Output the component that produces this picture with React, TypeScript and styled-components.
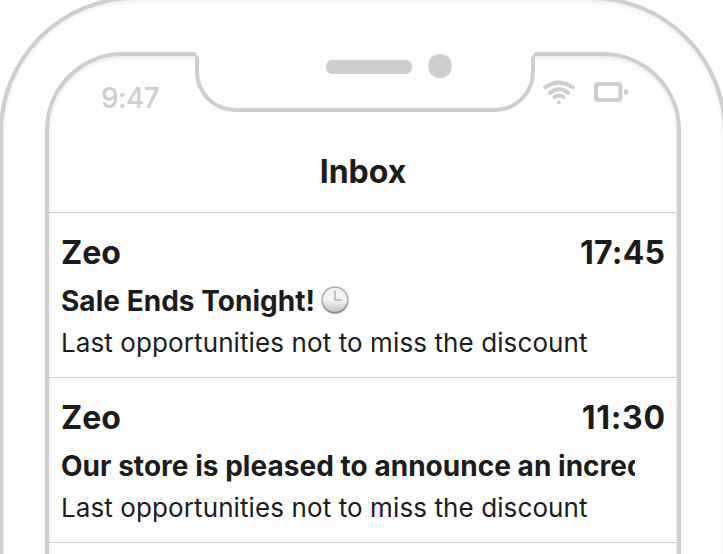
import React from "react";
import styled, { createGlobalStyle } from "styled-components";

const line = "#cecece";
const ink = "#1c1c1c";
const paper = "#fefefe";

const GlobalStyle = createGlobalStyle`
  * { box-sizing: border-box; }
  html, body { margin: 0; overflow: hidden; background: ${paper}; }
`;

const Stage = styled.main`
  width: 723px;
  height: 554px;
  overflow: hidden;
  display: flex;
  justify-content: center;
  align-items: flex-start;
  font-family: Inter, "Liberation Sans", sans-serif;
  color: ${ink};
`;

const Phone = styled.div`
  flex: none;
  width: 728px;
  height: 1400px;
  margin: -4px 0 0 3px;
  padding: 52px 42px;
  border: 4px solid ${line};
  border-radius: 136px;
  background: ${paper};
  box-shadow: inset 0 1px 4px rgba(0, 0, 0, 0.09);
`;

const Screen = styled.div`
  position: relative;
  height: 1200px;
  border: 4px solid ${line};
  border-radius: 78px;
  box-shadow: inset 0 1px 4px rgba(0, 0, 0, 0.11);
`;

const Notch = styled.div`
  position: absolute;
  top: -4px;
  left: 146px;
  width: 340px;
  height: 60px;
  display: flex;
  justify-content: flex-end;
  gap: 16px;
  padding: 0 79px 0 0;
  border: 4px solid ${line};
  border-top: 6px solid ${paper};
  border-radius: 0 0 40px 40px;
  background: ${paper};
`;

const Speaker = styled.span`
  width: 86px;
  height: 14px;
  margin-top: 2px;
  border-radius: 6px;
  background: ${line};
`;

const Camera = styled.span`
  width: 24px;
  height: 24px;
  margin-top: -4px;
  border-radius: 50%;
  background: ${line};
`;

const StatusBar = styled.header`
  height: 80px;
  display: flex;
  justify-content: space-between;
  align-items: flex-start;
  padding: 24px 49px 0 52px;
`;

const Clock = styled.span`
  padding-top: 1px;
  font-size: 28px;
  font-weight: 500;
  line-height: 34px;
  letter-spacing: -0.6px;
  color: ${line};
`;

const Indicators = styled.div`
  display: flex;
  align-items: flex-start;
  gap: 18px;
`;

const Heading = styled.h1`
  height: 77px;
  margin: 0;
  padding-top: 16px;
  border-bottom: 1px solid ${line};
  font-size: 32px;
  font-weight: 700;
  line-height: 40px;
  text-align: center;
`;

const Message = styled.article`
  height: 165px;
  padding: 20px 12px 0 12px;
  border-bottom: 1px solid ${line};
`;

const MessageTop = styled.div`
  display: flex;
  justify-content: space-between;
  font-size: 32px;
  font-weight: 700;
  line-height: 40px;
`;

const Time = styled.time<{ $tracking: number }>`
  letter-spacing: ${(p) => p.$tracking}px;
  margin-right: ${(p) => -p.$tracking}px;
`;

const Subject = styled.div`
  display: flex;
  align-items: center;
  gap: 6px;
  width: 574px;
  height: 36px;
  margin-top: 10px;
  overflow: hidden;
  white-space: nowrap;
  font-size: 28px;
  font-weight: 700;
  line-height: 36px;
  letter-spacing: 0.03px;
`;

const Preview = styled.p`
  margin: 6px 0 0;
  font-size: 26px;
  line-height: 36px;
  letter-spacing: 0.1px;
  white-space: nowrap;
`;

const WifiIcon = () => (
  <svg width="34" height="26" viewBox="0 0 34 26" fill="none" stroke={line} strokeWidth="4" strokeLinecap="round">
    <path d="M3 7.4 Q17 -2.2 31 7.4" />
    <path d="M8 12.9 Q17 5.6 26 12.9" />
    <path d="M12.6 17.1 Q17 14 21.4 17.1" />
    <circle cx="16.9" cy="22.5" r="1.9" fill={line} stroke="none" />
  </svg>
);

const BatteryIcon = () => (
  <svg width="34" height="24" viewBox="0 0 34 24" fill="none">
    <rect x="2" y="4" width="24.4" height="16" rx="2.5" stroke={line} strokeWidth="4" />
    <rect x="29.8" y="9" width="4.2" height="6" rx="2" fill={line} />
  </svg>
);

const EmojiSvg = styled.svg`
  flex: none;
  margin-bottom: 2px;
`;

const ClockEmoji = () => (
  <EmojiSvg width="28" height="28" viewBox="0 0 28 28">
    <defs>
      <linearGradient id="rim" x1="0" y1="0" x2="0" y2="1">
        <stop offset="0" stopColor="#a9b1bd" />
        <stop offset="0.5" stopColor="#bbb" />
        <stop offset="1" stopColor="#858585" />
      </linearGradient>
      <linearGradient id="face" x1="0" y1="0" x2="0" y2="1">
        <stop offset="0" stopColor="#f1f1f1" />
        <stop offset="0.5" stopColor="#f4f4f4" />
        <stop offset="1" stopColor="#c4c4c4" />
      </linearGradient>
    </defs>
    <circle cx="14" cy="14" r="13.8" fill="url(#rim)" />
    <circle cx="14" cy="13.8" r="11.9" fill="url(#face)" />
    <path d="M14 4.5 V14 H20.5" fill="none" stroke="#b2b2b2" strokeWidth="1.5" />
  </EmojiSvg>
);

const messages = [
  { sender: "Zeo", time: "17:45", tracking: 0.2, subject: "Sale Ends Tonight!", clock: true },
  { sender: "Zeo", time: "11:30", tracking: 0.7, subject: "Our store is pleased to announce an incred", clock: false },
];

export default function App() {
  return (
    <>
      <GlobalStyle />
      <Stage>
        <Phone>
          <Screen>
            <StatusBar>
              <Clock>9:47</Clock>
              <Indicators>
                <WifiIcon />
                <BatteryIcon />
              </Indicators>
            </StatusBar>
            <Heading>Inbox</Heading>
            {messages.map((m) => (
              <Message key={m.time}>
                <MessageTop>
                  <span>{m.sender}</span>
                  <Time $tracking={m.tracking}>{m.time}</Time>
                </MessageTop>
                <Subject>
                  <span>{m.subject}</span>
                  {m.clock && <ClockEmoji />}
                </Subject>
                <Preview>Last opportunities not to miss the discount</Preview>
              </Message>
            ))}
            <Notch>
              <Speaker />
              <Camera />
            </Notch>
          </Screen>
        </Phone>
      </Stage>
    </>
  );
}
